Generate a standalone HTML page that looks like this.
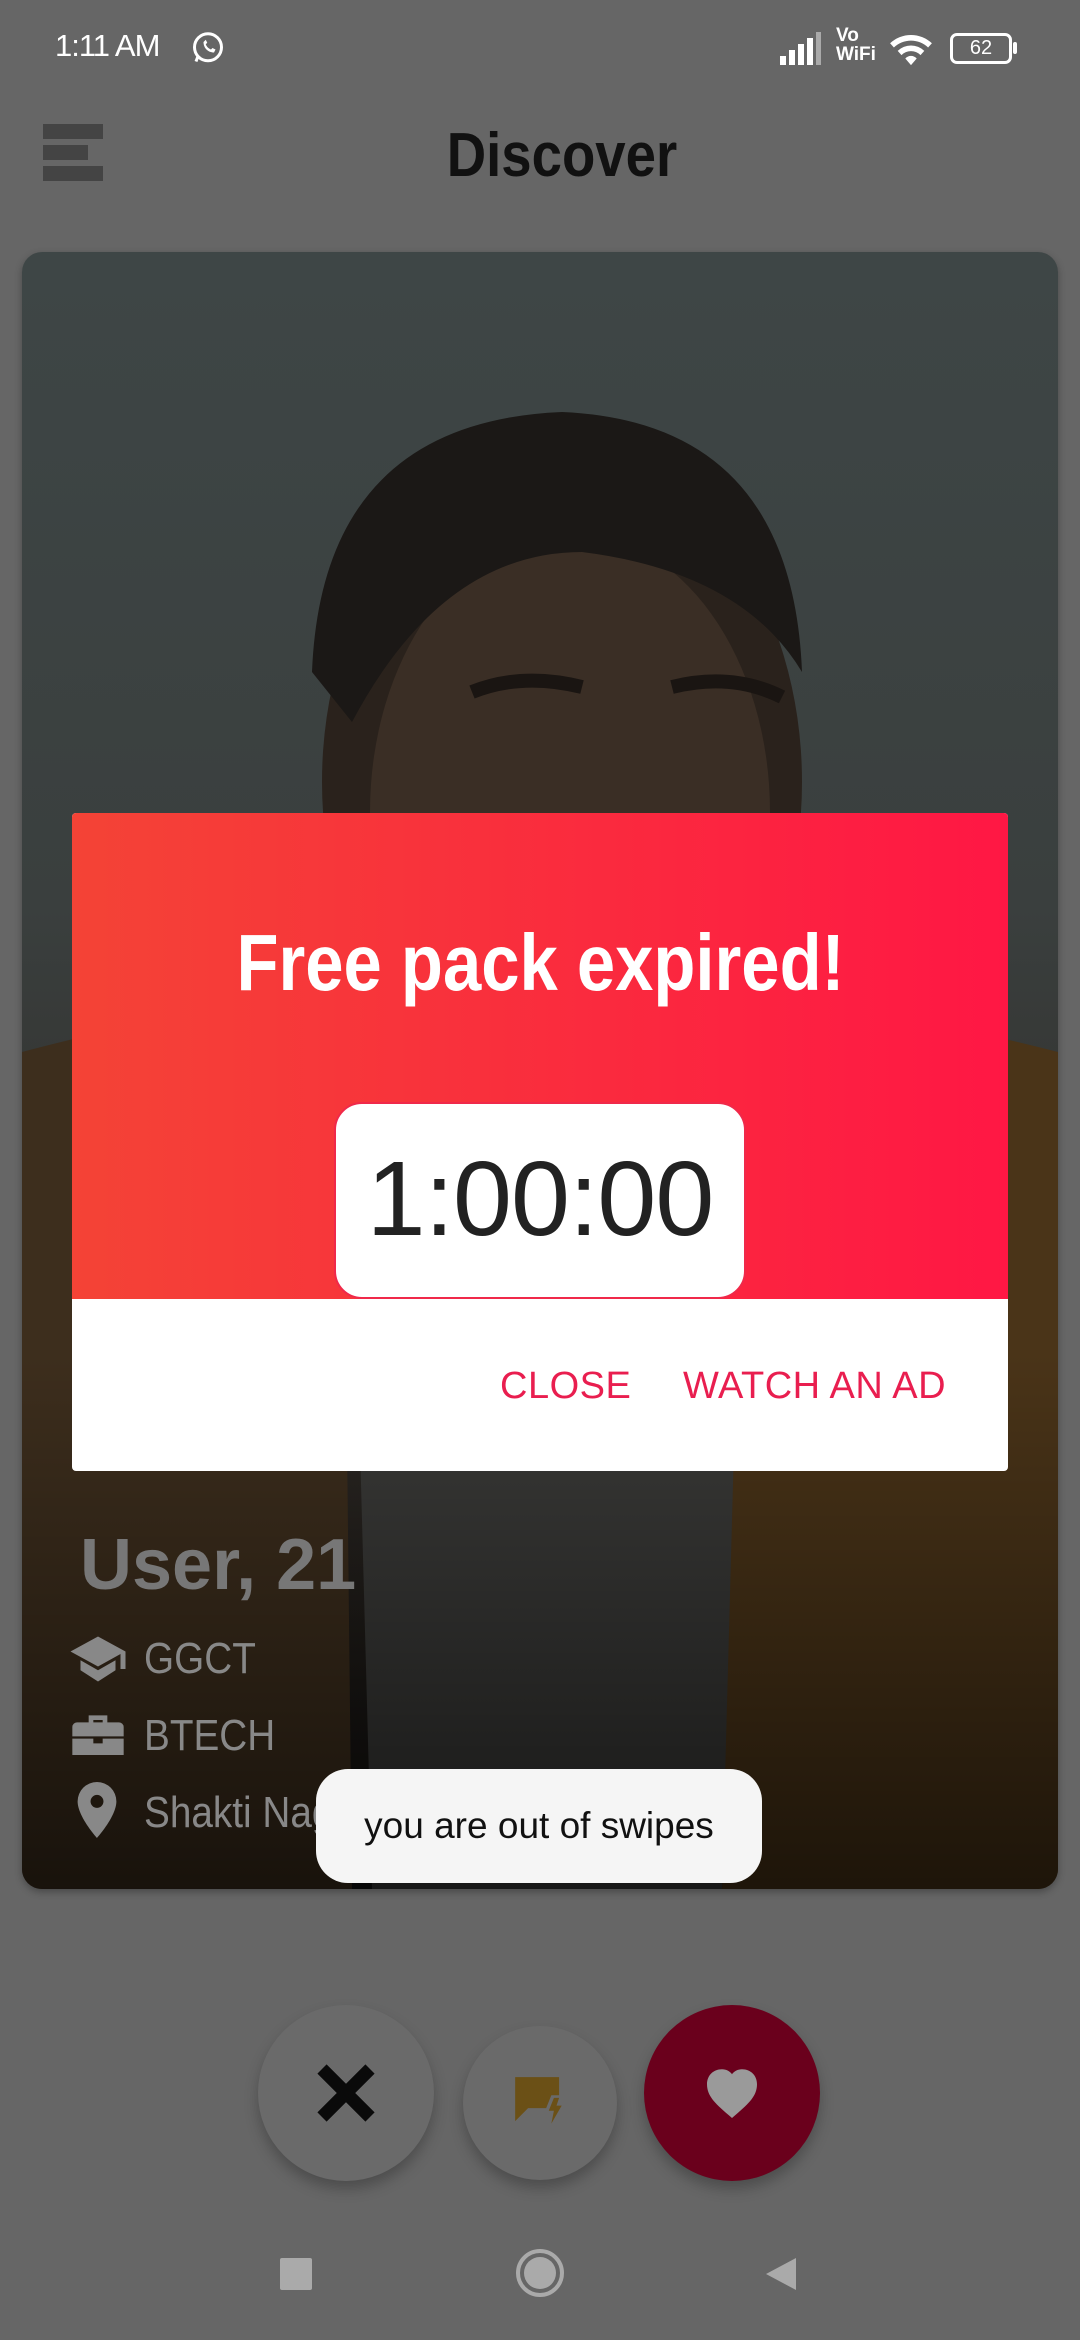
<!DOCTYPE html>
<html><head><meta charset="utf-8"><style>
*{margin:0;padding:0;box-sizing:border-box}
body{width:1080px;height:2340px;background:#666;position:relative;overflow:hidden;font-family:"Liberation Sans",sans-serif}
.abs{position:absolute}
.cond{display:inline-block;transform-origin:left center}
</style></head><body>
<!-- status bar -->
<div class="abs" style="left:55px;top:28px;color:#fff;font-size:31px;letter-spacing:-1px">1:11 AM</div>
<svg class="abs" style="left:190px;top:30px" width="36" height="36" viewBox="0 0 24 24"><circle cx="12" cy="11.5" r="9" fill="none" stroke="#fff" stroke-width="2"/><path d="M4 21l1.5-4" stroke="#fff" stroke-width="2"/><path d="M9 8c0 4 3 7 7 7l1-2-2-1-1 1c-1.5-.5-3-2-3.5-3.5l1-1-1-2z" fill="#fff"/></svg>
<svg class="abs" style="left:778px;top:30px" width="50" height="36" viewBox="0 0 50 36"><rect x="2" y="26" width="6" height="9" fill="#fff"/><rect x="11" y="20" width="6" height="15" fill="#fff"/><rect x="20" y="14" width="6" height="21" fill="#fff"/><rect x="29" y="8" width="6" height="27" fill="#fff"/><rect x="38" y="2" width="5" height="33" fill="#aaa"/></svg>
<div class="abs" style="left:836px;top:26px;color:#fff;font-size:19px;line-height:19px;font-weight:bold">Vo<br>WiFi</div>
<svg class="abs" style="left:888px;top:30px" width="46" height="38" viewBox="0 0 24 20"><path d="M1 7a16 16 0 0 1 22 0l-2 2.2a13 13 0 0 0-18 0z M5 11a10 10 0 0 1 14 0l-2 2.2a7 7 0 0 0-10 0z M9 15a4 4 0 0 1 6 0l-3 3.5z" fill="#fff"/></svg>
<div class="abs" style="left:950px;top:33px;width:62px;height:31px;border:3px solid #fff;border-radius:7px;color:#fff;font-size:20px;text-align:center;line-height:25px">62</div>
<div class="abs" style="left:1013px;top:42px;width:4px;height:12px;background:#fff;border-radius:2px"></div>
<!-- header -->
<div class="abs" style="left:43px;top:124px;width:60px;height:15px;background:#444"></div>
<div class="abs" style="left:43px;top:145px;width:45px;height:15px;background:#444"></div>
<div class="abs" style="left:43px;top:166px;width:60px;height:15px;background:#444"></div>
<div class="abs" style="left:0;top:120px;width:1124px;text-align:center;font-size:62px;color:#111;font-weight:bold"><span style="display:inline-block;transform:scaleX(.88)">Discover</span></div>
<!-- card -->
<div class="abs" style="left:22px;top:252px;width:1036px;height:1637px;border-radius:20px;overflow:hidden;background:linear-gradient(#3e4646,#3a3f3e 40%,#2e2a26 70%,#1a1714 90%,#111);box-shadow:0 3px 8px rgba(0,0,0,.3)">
  <svg class="abs" style="left:0;top:0" width="1036" height="1637" viewBox="0 0 1036 1637">
    <defs><linearGradient id="g" x1="0" y1="0" x2="0" y2="1"><stop offset="0" stop-color="#000" stop-opacity="0"/><stop offset="1" stop-color="#000" stop-opacity=".6"/></linearGradient></defs>
    <path d="M0 800 Q150 760 320 740 L330 1637 L0 1637Z" fill="#3d2e1d"/>
    <path d="M1036 800 Q880 760 720 740 L700 1637 L1036 1637Z" fill="#4a3418"/>
    <path d="M330 900 L720 900 L700 1637 L350 1637Z" fill="#3a3a38"/>
    <ellipse cx="540" cy="530" rx="240" ry="330" fill="#2a221c"/>
    <ellipse cx="548" cy="560" rx="200" ry="280" fill="#3a2e25"/>
    <path d="M290 420 Q300 170 540 160 Q770 170 780 420 Q720 320 560 300 Q420 300 330 470Z" fill="#1b1816"/>
    <path d="M450 440 Q500 420 560 435 M650 435 Q710 420 760 445" stroke="#1a1512" stroke-width="14" fill="none"/>
    <rect x="0" y="1100" width="1036" height="537" fill="url(#g)"/>
  </svg>
  <div class="abs" style="left:58px;top:1272px;font-size:72px;font-weight:bold;color:#777">User, 21</div>
  <svg class="abs" style="left:46px;top:1382px" width="60" height="50" viewBox="0 0 24 20"><path d="M12 1L1 7l11 6 9-5v6h2V7z M5 10.5v4L12 19l7-4.5v-4L12 14.5z" fill="#888"/></svg>
  <div class="abs" style="left:122px;top:1382px;font-size:44px;color:#888"><span class="cond" style="transform:scaleX(.88)">GGCT</span></div>
  <svg class="abs" style="left:48px;top:1456px" width="56" height="52" viewBox="0 0 24 22"><path d="M8 3h8v3h5a2 2 0 0 1 2 2v4H1V8a2 2 0 0 1 2-2h5z M10 5v1h4V5z M1 13h9v2h4v-2h9v7H1z" fill="#888"/></svg>
  <div class="abs" style="left:122px;top:1459px;font-size:44px;color:#888"><span class="cond" style="transform:scaleX(.88)">BTECH</span></div>
  <svg class="abs" style="left:52px;top:1530px" width="46" height="56" viewBox="0 0 20 26"><path d="M10 0a9 9 0 0 0-9 9c0 7 9 17 9 17s9-10 9-17a9 9 0 0 0-9-9zm0 12a3 3 0 1 1 0-6 3 3 0 0 1 0 6z" fill="#888"/></svg>
  <div class="abs" style="left:122px;top:1536px;font-size:44px;color:#888"><span class="cond" style="transform:scaleX(.88)">Shakti Nagar</span></div>
</div>
<!-- dialog -->
<div class="abs" style="left:72px;top:813px;width:936px;height:658px;background:#fff;border-radius:4px;overflow:hidden">
  <div style="height:486px;background:linear-gradient(90deg,#f44336,#ff1744)"></div>
  <div class="abs" style="left:0;top:104px;width:936px;text-align:center;color:#fff;font-size:80px;font-weight:bold"><span style="display:inline-block;transform:scaleX(.86)">Free pack expired!</span></div>
  <div class="abs" style="left:262px;top:289px;width:412px;height:197px;background:#fff;border-radius:28px;border:2px solid #f0294a;text-align:center;line-height:190px;font-size:106px;color:#222;letter-spacing:-1px">1:00:00</div>
  <div class="abs" style="left:428px;top:552px;font-size:38px;color:#e91e4f;letter-spacing:.5px">CLOSE</div>
  <div class="abs" style="left:611px;top:552px;font-size:38px;color:#e91e4f;letter-spacing:.5px">WATCH AN AD</div>
</div>
<!-- toast -->
<div class="abs" style="left:316px;top:1769px;width:446px;height:114px;background:#f5f5f5;border-radius:32px;text-align:center;line-height:114px;font-size:37px;color:#111">you are out of swipes</div>
<!-- action buttons -->
<div class="abs" style="left:258px;top:2005px;width:176px;height:176px;border-radius:50%;background:#6a6a6a;box-shadow:0 8px 14px rgba(0,0,0,.25)"></div>
<svg class="abs" style="left:316px;top:2063px" width="60" height="60" viewBox="0 0 60 60"><path d="M6 6L54 54M54 6L6 54" stroke="#0a0a0a" stroke-width="13"/></svg>
<div class="abs" style="left:463px;top:2026px;width:154px;height:154px;border-radius:50%;background:#6a6a6a;box-shadow:0 8px 14px rgba(0,0,0,.25)"></div>
<svg class="abs" style="left:510px;top:2072px" width="62" height="62" viewBox="0 0 24 24"><path d="M2 2h17v7h-3l-2 5h-7l-5 5z" fill="#6b5016"/><path d="M17 10l-2 5h2l-1 5 4-7h-2l1-3z" fill="#6b5016"/></svg>
<div class="abs" style="left:644px;top:2005px;width:176px;height:176px;border-radius:50%;background:#6a001c;box-shadow:0 8px 14px rgba(0,0,0,.25)"></div>
<svg class="abs" style="left:702px;top:2065px" width="60" height="56" viewBox="0 0 24 22"><path d="M12 21l-1.5-1.3C5 15 2 12 2 7.5 2 4 4.5 1.5 8 1.5c1.7 0 3.2.8 4 2 .8-1.2 2.3-2 4-2 3.5 0 6 2.5 6 6 0 4.5-3 7.5-8.5 12.2z" fill="#9a9a9a"/></svg>
<!-- nav -->
<div class="abs" style="left:280px;top:2258px;width:32px;height:32px;background:#aaa;border-radius:2px"></div>
<div class="abs" style="left:516px;top:2249px;width:48px;height:48px;border-radius:50%;border:4px solid #aaa"></div>
<div class="abs" style="left:524px;top:2257px;width:32px;height:32px;border-radius:50%;background:#aaa"></div>
<svg class="abs" style="left:764px;top:2256px" width="34" height="36" viewBox="0 0 34 36"><path d="M32 2L2 18l30 16z" fill="#aaa"/></svg>
</body></html>
